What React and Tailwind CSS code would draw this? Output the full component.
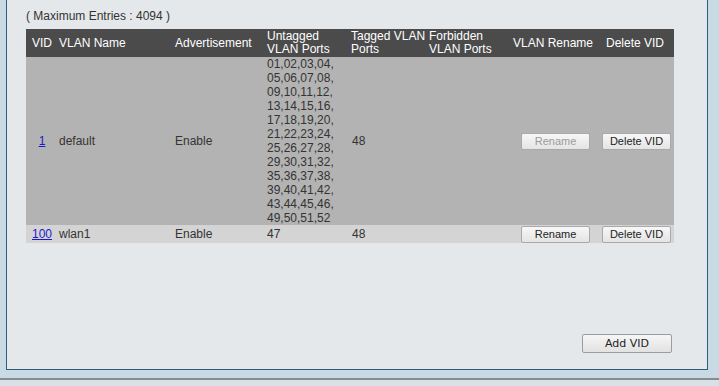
import React from "react";

const cols = "grid grid-cols-[32px_116px_91px_85px_76px_80px_92px_76px]";

const portLines = [
  "01,02,03,04,",
  "05,06,07,08,",
  "09,10,11,12,",
  "13,14,15,16,",
  "17,18,19,20,",
  "21,22,23,24,",
  "25,26,27,28,",
  "29,30,31,32,",
  "35,36,37,38,",
  "39,40,41,42,",
  "43,44,45,46,",
  "49,50,51,52",
];

const vlans = [
  { vid: "1", name: "default", adv: "Enable", untagged: portLines, tagged: "48", canRename: false },
  { vid: "100", name: "wlan1", adv: "Enable", untagged: ["47"], tagged: "48", canRename: true },
];

const SmallButton = ({ children, disabled }) => (
  <button
    disabled={disabled}
    className={`w-[69px] h-[17px] border border-[#a9a9a9] rounded-[2px] bg-gradient-to-b from-[#f7f7f7] to-[#e4e4e4] text-[11px] leading-[15px] ${
      disabled ? "text-[#9a9a9a]" : "text-[#222]"
    }`}
  >
    {children}
  </button>
);

const VlanRow = ({ vlan, bg }) => (
  <div className={`${cols} ${bg} items-center text-[12px] leading-[14px] text-[#333]`}>
    <div className="text-center">
      <a href="#" className="text-[#1a1acc] underline">
        {vlan.vid}
      </a>
    </div>
    <div className="pl-[1px]">{vlan.name}</div>
    <div className="pl-[1px]">{vlan.adv}</div>
    <div className="pl-[2px]">
      {vlan.untagged.map((line) => (
        <div key={line}>{line}</div>
      ))}
    </div>
    <div className="pl-[2px]">{vlan.tagged}</div>
    <div />
    <div className="pl-[15px] flex">
      <SmallButton disabled={!vlan.canRename}>Rename</SmallButton>
    </div>
    <div className="pl-[4px] flex">
      <SmallButton>Delete VID</SmallButton>
    </div>
  </div>
);

export default function App() {
  return (
    <div className="w-[719px] h-[386px] overflow-hidden bg-[#c8dae4] font-['Liberation_Sans',Arial,sans-serif] flex flex-col">
      <div className="ml-[6px] w-[702px] h-[370px] shrink-0 border-x border-b border-[#2f5d7c] bg-[#e4e8eb] pl-[19px] pt-[9px]">
        <p className="text-[12px] leading-[14px] text-[#333]">( Maximum Entries : 4094 )</p>

        <div className="mt-[6px] w-[648px]">
          <div className={`${cols} h-[28px] bg-[#4b4b4b] items-center text-[12px] leading-[13px] text-white whitespace-nowrap`}>
            <div className="text-center">VID</div>
            <div className="pl-[1px]">VLAN Name</div>
            <div className="pl-[1px]">Advertisement</div>
            <div className="pl-[2px]">
              Untagged
              <br />
              VLAN Ports
            </div>
            <div className="pl-[1px]">
              Tagged VLAN
              <br />
              Ports
            </div>
            <div className="pl-[3px]">
              Forbidden
              <br />
              VLAN Ports
            </div>
            <div className="pl-[7px]">VLAN Rename</div>
            <div className="pl-[8px]">Delete VID</div>
          </div>
          <VlanRow vlan={vlans[0]} bg="bg-[#b3b3b3]" />
          <VlanRow vlan={vlans[1]} bg="bg-[#d4d4d4] h-[18px]" />
        </div>

        <div className="w-[646px] mt-[91px] flex justify-end">
          <button className="w-[90px] h-[19px] border border-[#9c9c9c] rounded-[2px] bg-gradient-to-b from-[#f6f6f6] to-[#e2e2e2] font-['DejaVu_Sans',sans-serif] text-[11px] leading-[17px] text-[#222]">
            Add VID
          </button>
        </div>
      </div>
      <div className="h-[8px] shrink-0" />
      <div className="h-[2px] shrink-0 bg-[#8a8a8a]" />
      <div className="flex-1 bg-[#d6e2e8]" />
    </div>
  );
}
